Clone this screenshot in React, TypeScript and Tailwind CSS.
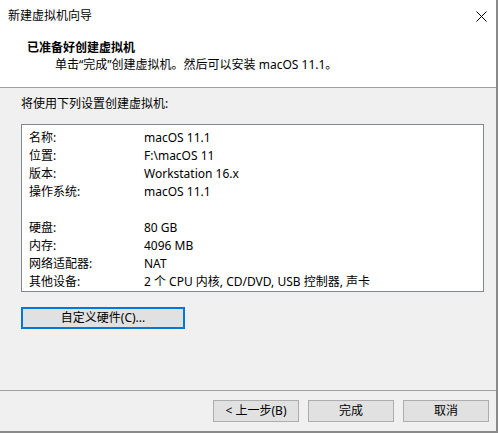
import React from "react";

const rows: [string, string][] = [
  ["名称:", "macOS 11.1"],
  ["位置:", "F:\\macOS 11"],
  ["版本:", "Workstation 16.x"],
  ["操作系统:", "macOS 11.1"],
  ["", ""],
  ["硬盘:", "80 GB"],
  ["内存:", "4096 MB"],
  ["网络适配器:", "NAT"],
  ["其他设备:", "2 个 CPU 内核, CD/DVD, USB 控制器, 声卡"],
];

export default function App() {
  return (
    <div
      className="w-[498px] h-[433px] bg-[#f0f0f0] border-r-2 border-b-2 border-[#8a8a8a] flex flex-col text-[12px] text-black"
      style={{ fontFamily: '"Noto Sans", "Noto Sans CJK SC", sans-serif' }}
    >
      <div className="bg-white h-[87px] flex flex-col">
        <div className="h-[31px] flex items-center justify-between pl-[8px] pr-[8px] pt-px">
          <span className="leading-none">新建虚拟机向导</span>
          <svg width="11" height="11" viewBox="0 0 11 11" className="mr-[1px]">
            <path d="M0.5 0.5 L10.5 10.5 M10.5 0.5 L0.5 10.5" stroke="#000" strokeWidth="1" fill="none" />
          </svg>
        </div>
        <div className="pl-[27px] pt-[8px] font-bold leading-[18px]">已准备好创建虚拟机</div>
        <div className="pl-[55px] leading-[16px]">单击“完成”创建虚拟机。然后可以安装 macOS 11.1。</div>
      </div>
      <div className="h-px bg-[#a0a0a0]" />
      <div className="flex-1 flex flex-col px-[21px]">
        <div className="pt-[8px] leading-[16px]">将使用下列设置创建虚拟机:</div>
        <div className="mt-[12px] w-[463px] h-[168px] bg-white border border-[#828790] pt-[4px] pl-[7px]">
          {rows.map(([k, v], i) => (
            <div key={i} className="flex h-[18px] items-center">
              <span className="w-[115px]">{k}</span>
              <span>{v}</span>
            </div>
          ))}
        </div>
        <button className="mt-[15px] w-[164px] h-[22px] bg-[#e1e1e1] border-2 border-[#0078d7] flex items-center justify-center leading-none">
          自定义硬件(C)...
        </button>
        <div className="flex-1" />
      </div>
      <div className="h-px bg-[#a0a0a0]" />
      <div className="h-[40px] flex items-start justify-end gap-[9px] pt-[9px] pr-[7px]">
        <button className="w-[86px] h-[22px] bg-[#e1e1e1] border border-[#adadad] leading-none">&lt; 上一步(B)</button>
        <button className="w-[86px] h-[22px] bg-[#e1e1e1] border border-[#adadad] leading-none">完成</button>
        <button className="w-[86px] h-[22px] bg-[#e1e1e1] border border-[#adadad] leading-none">取消</button>
      </div>
    </div>
  );
}
